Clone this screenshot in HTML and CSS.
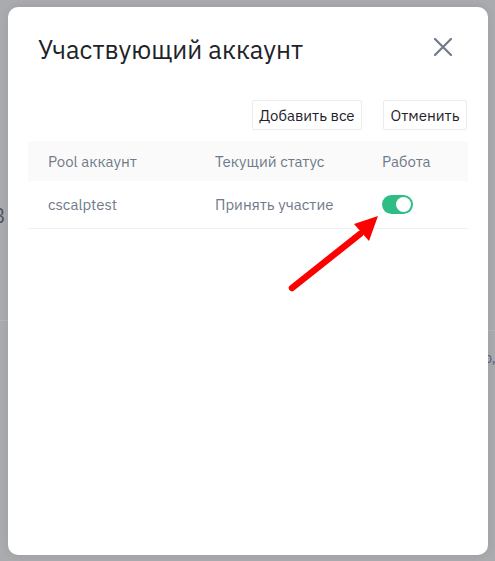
FILE: index.html
```html
<!DOCTYPE html>
<html lang="ru">
<head>
<meta charset="utf-8">
<link rel="stylesheet" href="styles.css">
</head>
<body>
<div class="backdrop">
  <span class="bg-glyph bg-left">В</span>
  <span class="bg-glyph bg-right">р,</span>
  <div class="bg-line bg-line-left"></div>
  <div class="bg-line bg-line-right"></div>
  <div class="modal">
    <div class="modal-header">
      <h2 class="title">Участвующий аккаунт</h2>
      <button class="close" aria-label="Закрыть">
        <svg width="20" height="20" viewBox="0 0 20 20"><path d="M2 2 L18 18 M18 2 L2 18" stroke="#707a8a" stroke-width="2.2" stroke-linecap="round"/></svg>
      </button>
    </div>
    <div class="actions">
      <button class="btn">Добавить все</button>
      <button class="btn">Отменить</button>
    </div>
    <div class="table">
      <div class="row head">
        <div class="cell c1">Pool аккаунт</div>
        <div class="cell c2">Текущий статус</div>
        <div class="cell c3">Работа</div>
      </div>
      <div class="row body">
        <div class="cell c1">cscalptest</div>
        <div class="cell c2">Принять участие</div>
        <div class="cell c3"><span class="toggle"><span class="knob"></span></span></div>
      </div>
    </div>
    <svg class="arrow" width="120" height="110" viewBox="0 0 120 110">
      <line x1="12" y1="96" x2="80" y2="42" stroke="#ff0000" stroke-width="6.5" stroke-linecap="round"/>
      <polygon points="98,24 74,32 89,49" fill="#ff0000"/>
    </svg>
  </div>
</div>
</body>
</html>
```
FILE: styles.css
```css
* { box-sizing: border-box; }
html, body { margin: 0; padding: 0; }
body {
  width: 495px;
  height: 561px;
  overflow: hidden;
  background: #a9abae;
  font-family: "IBM Plex Sans", Inter, "Noto Sans", sans-serif;
}
.backdrop {
  position: relative;
  width: 495px;
  height: 561px;
  padding: 7px 7px 6px 8px;
}
.bg-glyph {
  position: absolute;
  color: #4f555e;
  font-size: 20px;
  line-height: 1;
}
.bg-left { left: -8px; top: 206px; }
.bg-right { left: 484px; top: 351px; font-size: 14px; color: #5a5f80; }
.bg-line {
  position: absolute;
  height: 1px;
  background: #b3b5b8;
}
.bg-line-left { left: 0; width: 8px; top: 320px; }
.bg-line-right { left: 488px; width: 7px; top: 330px; }
.modal {
  position: relative;
  width: 480px;
  height: 548px;
  background: #ffffff;
  border-radius: 10px;
  padding: 0 20px;
  box-shadow: 0 0 10px rgba(0,0,0,0.08);
}
.modal-header {
  display: flex;
  align-items: center;
  justify-content: space-between;
  padding: 27px 15px 0 10px;
}
.title {
  margin: 0;
  font-size: 25.5px;
  font-weight: 400;
  line-height: 32px;
  color: #1e2329;
  letter-spacing: 0;
}
.close {
  border: 0;
  background: none;
  padding: 0;
  width: 20px;
  height: 20px;
  display: flex;
  align-items: center;
  justify-content: center;
  margin-top: -6px;
}
.actions {
  display: flex;
  justify-content: flex-end;
  gap: 21px;
  padding: 34px 1px 0 0;
}
.btn {
  height: 30px;
  padding: 0 6.5px;
  background: #fff;
  border: 1px solid #eaecef;
  border-radius: 2px;
  font-family: inherit;
  font-size: 15px;
  color: #1e2329;
}
.table {
  margin-top: 11px;
}
.row {
  display: flex;
  align-items: center;
}
.row.head {
  height: 40px;
  background: #fafafa;
}
.row.body {
  height: 48px;
  border-bottom: 1px solid #f0f1f2;
}
.cell {
  font-size: 15px;
  color: #707a8a;
}
.c1 { width: 187px; padding-left: 20px; }
.c2 { width: 167px; }
.c3 { flex: 1; }
.toggle {
  display: block;
  position: relative;
  width: 31px;
  height: 19px;
  border-radius: 10px;
  background: #2ebd85;
  margin-top: 0;
}
.knob {
  position: absolute;
  right: 2px;
  top: 2px;
  width: 15px;
  height: 15px;
  border-radius: 50%;
  background: #fff;
}
.arrow {
  position: absolute;
  left: 272px;
  top: 185px;
}
```
